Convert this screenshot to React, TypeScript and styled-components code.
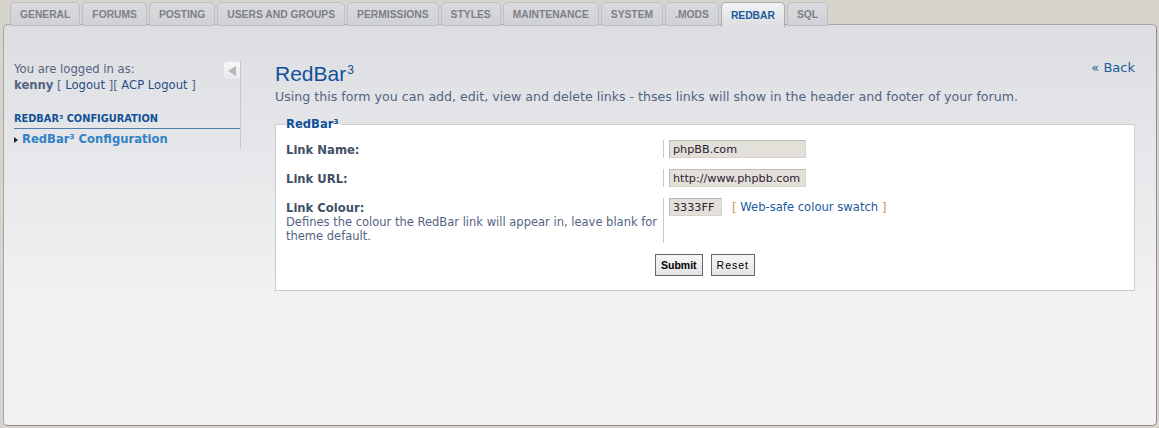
import React from "react";
import styled, { createGlobalStyle } from "styled-components";

const Global = createGlobalStyle`
  html, body { margin: 0; padding: 0; }
  body {
    background: #d7d4cd;
    font-family: "DejaVu Sans", Verdana, sans-serif;
    width: 1159px;
    height: 428px;
    overflow: hidden;
  }
`;

const Wrap = styled.div`
  display: flex;
  flex-direction: column;
  height: 428px;
`;

const TabBar = styled.ul`
  display: flex;
  gap: 2px;
  list-style: none;
  margin: 0;
  padding: 2px 0 0 10px;
  height: 24px;
  box-sizing: border-box;
  position: relative;
  z-index: 2;
`;

const Tab = styled.li<{ $active?: boolean }>`
  display: flex;
  align-items: center;
  height: ${(p) => (p.$active ? "25px" : "24px")};
  box-sizing: border-box;
  padding: 1px 9px 0;
  border: 1px solid ${(p) => (p.$active ? "#a9abb0" : "#bdbfc3")};
  border-bottom: ${(p) => (p.$active ? "none" : "1px solid #bdbfc3")};
  border-radius: 5px 5px 0 0;
  background: ${(p) =>
    p.$active
      ? "linear-gradient(#f2f3f5, #dcdee2)"
      : "linear-gradient(#d9dbdf, #cfd1d6)"};
  font-family: "Liberation Sans", Arial, sans-serif;
  font-weight: bold;
  font-size: 10.3px;
  color: ${(p) => (p.$active ? "#1c5a9c" : "#7e8084")};
  white-space: nowrap;
`;

const Panel = styled.div`
  flex: 1;
  margin: 0 2px 2px 3px;
  border: 1px solid #a6a6a6;
  border-right-color: #8e8e8e;
  border-bottom-color: #8e8e8e;
  border-radius: 5px;
  background: linear-gradient(#dcdee2 0px, #e9eaec 170px, #f2f2f2 280px, #f2f2f2 100%);
  display: flex;
  align-items: flex-start;
  padding: 35px 21px 0 10px;
  box-sizing: border-box;
`;

const Sidebar = styled.div`
  position: relative;
  width: 226px;
  flex: none;
  border-right: 1px solid #c5c7cc;
  padding-bottom: 2px;
`;

const Collapse = styled.div`
  position: absolute;
  right: 0;
  top: 2px;
  width: 16px;
  height: 17px;
  border-radius: 3px 0 0 3px;
  background: linear-gradient(#f7f7f8, #e8e9eb);
  display: flex;
  align-items: center;
  justify-content: center;
  &::before {
    content: "";
    border-style: solid;
    border-width: 5px 8px 5px 0;
    border-color: transparent #b5b7bb transparent transparent;
  }
`;

const LoggedIn = styled.div`
  font-size: 11.6px;
  line-height: 16px;
  color: #536482;
  padding-top: 1px;
`;

const Name = styled.b`
  color: #536482;
`;

const Bracket = styled.span`
  color: #536482;
`;

const SideLink = styled.a`
  color: #2a4d86;
  text-decoration: none;
`;

const MenuHead = styled.div`
  margin-top: 20px;
  font-size: 9.8px;
  font-weight: bold;
  color: #115098;
  text-transform: uppercase;
  padding-bottom: 3px;
  border-bottom: 1px solid #4f7fac;
  line-height: 12px;
`;

const MenuItem = styled.a`
  display: flex;
  align-items: center;
  gap: 4px;
  margin-top: 3px;
  font-size: 11.6px;
  font-weight: bold;
  color: #3281c4;
  text-decoration: none;
  line-height: 15px;
`;

const Arrow = styled.span`
  display: inline-block;
  border-style: solid;
  border-width: 3px 0 3px 4px;
  border-color: transparent transparent transparent #222;
`;

const Main = styled.div`
  flex: 1;
  margin-left: 34px;
`;

const Head = styled.div`
  display: flex;
  justify-content: space-between;
  align-items: flex-start;
`;

const Title = styled.h1`
  margin: 2px 0 0;
  font-family: "Liberation Sans", Arial, sans-serif;
  font-weight: normal;
  font-size: 21px;
  line-height: 24px;
  color: #115098;
  sup {
    font-size: 12px;
    vertical-align: 7px;
    line-height: 0;
    margin-left: 1px;
  }
`;

const Back = styled.a`
  font-size: 13px;
  color: #1c5a9c;
  text-decoration: none;
  line-height: 16px;
`;

const Desc = styled.p`
  margin: 3px 0 0;
  font-size: 12.6px;
  color: #536482;
  line-height: 16px;
`;

const Fieldset = styled.fieldset`
  margin: 13px 0 0;
  background: #fff;
  border: 1px solid #cccccc;
  padding: 10px 10px 14px;
  min-width: 0;
`;

const Legend = styled.legend`
  font-size: 11.6px;
  font-weight: bold;
  color: #115098;
  padding: 0 2px 0 0;
  margin-left: 0;
  line-height: 12px;
`;

const Row = styled.dl`
  display: flex;
  margin: 0 0 11px;
  min-height: 18px;
`;

const Dt = styled.dt`
  width: 377px;
  flex: none;
  border-right: 1px solid #c8c8c8;
  font-size: 11.6px;
  color: #536482;
  line-height: 14px;
`;

const Label = styled.label`
  display: block;
  font-weight: bold;
  color: #425067;
  padding-top: 3px;
`;

const Explain = styled.span`
  display: block;
  font-size: 11.5px;
  line-height: 14px;
  color: #536482;
`;

const Dd = styled.dd`
  margin: 0 0 0 5px;
  display: flex;
  align-items: flex-start;
  gap: 10px;
`;

const Input = styled.input<{ $w: number }>`
  width: ${(p) => p.$w}px;
  height: 18px;
  box-sizing: border-box;
  margin: 0;
  padding: 0 0 0 3px;
  border: 1px solid #d6d2cb;
  border-top-color: #bdb9b2;
  border-left-color: #bdb9b2;
  background: #e3dfd9;
  font-family: "DejaVu Sans", Verdana, sans-serif;
  font-size: 11.2px;
  color: #2c2234;
  outline: none;
`;

const Swatch = styled.span`
  font-size: 11.6px;
  color: #d0914a;
  line-height: 18px;
  a {
    color: #1c5a9c;
    text-decoration: none;
  }
`;

const Buttons = styled.div`
  display: flex;
  justify-content: center;
  gap: 8px;
  margin-top: 11px;
`;

const Button = styled.button<{ $primary?: boolean }>`
  height: 22px;
  box-sizing: border-box;
  padding: 0 5px;
  border: 1px solid #666;
  background: linear-gradient(#f6f6f6, #e4e4e4);
  font-family: "Liberation Sans", Arial, sans-serif;
  font-size: 10.5px;
  font-weight: ${(p) => (p.$primary ? "bold" : "normal")};
  letter-spacing: ${(p) => (p.$primary ? "0" : "1px")};
  color: #000;
  cursor: pointer;
`;

const tabs = [
  "General",
  "Forums",
  "Posting",
  "Users and Groups",
  "Permissions",
  "Styles",
  "Maintenance",
  "System",
  ".MODs",
  "RedBar",
  "SQL",
];

export default function App() {
  return (
    <Wrap>
      <Global />
      <TabBar>
        {tabs.map((t) => (
          <Tab key={t} $active={t === "RedBar"}>
            {t.toUpperCase()}
          </Tab>
        ))}
      </TabBar>
      <Panel>
        <Sidebar>
          <Collapse />
          <LoggedIn>
            You are logged in as:
            <br />
            <Name>kenny</Name> <Bracket>[</Bracket> <SideLink href="#">Logout</SideLink>{" "}
            <Bracket>][</Bracket> <SideLink href="#">ACP Logout</SideLink> <Bracket>]</Bracket>
          </LoggedIn>
          <MenuHead>RedBar³ Configuration</MenuHead>
          <MenuItem href="#">
            <Arrow />
            RedBar³ Configuration
          </MenuItem>
        </Sidebar>
        <Main>
          <Head>
            <Title>
              RedBar<sup>3</sup>
            </Title>
            <Back href="#">« Back</Back>
          </Head>
          <Desc>
            Using this form you can add, edit, view and delete links - thses links will show in
            the header and footer of your forum.
          </Desc>
          <Fieldset>
            <Legend>RedBar³</Legend>
            <Row>
              <Dt>
                <Label>Link Name:</Label>
              </Dt>
              <Dd>
                <Input $w={137} defaultValue="phpBB.com" />
              </Dd>
            </Row>
            <Row>
              <Dt>
                <Label>Link URL:</Label>
              </Dt>
              <Dd>
                <Input $w={137} defaultValue="http://www.phpbb.com" />
              </Dd>
            </Row>
            <Row>
              <Dt>
                <Label>Link Colour:</Label>
                <Explain>
                  Defines the colour the RedBar link will appear in, leave blank for theme
                  default.
                </Explain>
              </Dt>
              <Dd>
                <Input $w={53} defaultValue="3333FF" />
                <Swatch>
                  [ <a href="#">Web-safe colour swatch</a> ]
                </Swatch>
              </Dd>
            </Row>
            <Buttons>
              <Button $primary>Submit</Button>
              <Button>Reset</Button>
            </Buttons>
          </Fieldset>
        </Main>
      </Panel>
    </Wrap>
  );
}
